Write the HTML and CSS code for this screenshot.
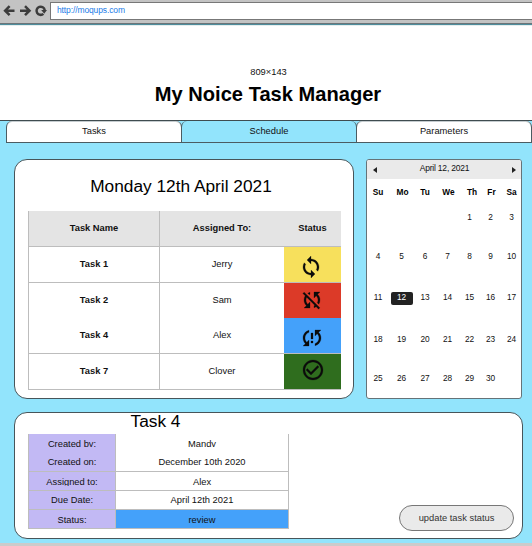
FILE: index.html
```html
<!DOCTYPE html>
<html lang="en">
<head>
<meta charset="utf-8">
<title>My Noice Task Manager</title>
<link rel="stylesheet" href="styles.css">
</head>
<body>
<div class="browser">
  <svg class="nav" viewBox="0 0 50 23" fill="none" stroke="#3c3c3c" stroke-width="2.5">
    <path d="M5 10.700H14.500M9.600 6.200L5.100 10.700L9.600 15.200"/>
    <path d="M20 10.700H29.500M25 6.200L29.500 10.700L25 15.200"/>
    <path d="M43.400 13.800A4.100 4.100 0 1 1 44.700 10.200"/>
    <path d="M41.200 10H47L44.200 13.800Z" fill="#3c3c3c" stroke="none"/>
  </svg>
  <div class="address">http://moqups.com</div>
</div>
<header class="header">
  <div class="dims">809×143</div>
  <h1>My Noice Task Manager</h1>
</header>
<nav class="tabs">
  <div class="tab">Tasks</div>
  <div class="tab active">Schedule</div>
  <div class="tab">Parameters</div>
</nav>
<main class="main">
  <section class="card schedule">
    <h2>Monday 12th April 2021</h2>
    <div class="tasks">
      <div class="row head"><b>Task Name</b><b>Assigned To:</b><b class="status">Status</b></div>
      <div class="row"><b>Task 1</b><span>Jerry</span><div class="status yellow"><svg class="icon low sync" viewBox="0 0 24 24"><path d="M12 4V1L8 5l4 4V6c3.310 0 6 2.690 6 6 0 1.010-.25 1.970-.7 2.800l1.460 1.460C19.540 15.030 20 13.570 20 12c0-4.420-3.580-8-8-8zm0 14c-3.310 0-6-2.690-6-6 0-1.010.25-1.970.7-2.800L5.240 7.740C4.460 8.970 4 10.430 4 12c0 4.420 3.580 8 8 8v3l4-4-4-4v3z"/></svg></div></div>
      <div class="row merged"><b>Task 2</b><span>Sam</span><div class="status red"><svg class="icon disabled" viewBox="0 0 24 24"><path d="M10 6.350V4.260c-.8.210-1.550.540-2.230.960l1.460 1.460c.25-.12.5-.24.77-.33zm-7.140-.94l2.360 2.360C4.450 8.990 4 10.440 4 12c0 2.210.91 4.200 2.360 5.640L4 20h6v-6l-2.240 2.240C6.680 15.150 6 13.660 6 12c0-1 .25-1.940.68-2.770l8.080 8.080c-.25.130-.5.250-.77.340v2.090c.8-.21 1.550-.54 2.230-.96l2.360 2.360 1.270-1.270L4.140 4.140 2.860 5.410zM20 4h-6v6l2.240-2.240C17.320 8.850 18 10.340 18 12c0 1-.25 1.940-.68 2.770l1.460 1.460C19.550 15.010 20 13.560 20 12c0-2.210-.91-4.200-2.360-5.640L20 4z"/></svg></div></div>
      <div class="row"><b>Task 4</b><span>Alex</span><div class="status blue"><svg class="icon low" viewBox="0 0 24 24"><path d="M3 12c0 2.210.91 4.200 2.360 5.640L3 20h6v-6l-2.240 2.240C5.680 15.150 5 13.660 5 12c0-2.610 1.670-4.830 4-5.650V4.260C5.550 5.150 3 8.270 3 12zm8 5h2v-2h-2v2zM21 4h-6v6l2.240-2.240C18.320 8.850 19 10.340 19 12c0 2.610-1.670 4.830-4 5.650v2.090c3.450-.89 6-4.010 6-7.740 0-2.210-.91-4.200-2.360-5.640L21 4zm-10 9h2V7h-2v6z"/></svg></div></div>
      <div class="row"><b>Task 7</b><span>Clover</span><div class="status green"><svg class="icon high" viewBox="0 0 24 24"><path d="M16.590 7.580L10 14.170l-3.590-3.580L5 12l5 5 8-8-1.410-1.420zM12 2C6.480 2 2 6.480 2 12s4.480 10 10 10 10-4.480 10-10S17.520 2 12 2zm0 18c-4.420 0-8-3.580-8-8s3.580-8 8-8 8 3.580 8 8-3.580 8-8 8z"/></svg></div></div>
    </div>
  </section>
  <section class="calendar">
    <div class="cal-head">
      <svg class="arrow" viewBox="0 0 4 6"><path d="M4 0V6L0 3Z"/></svg>
      <span>April 12, 2021</span>
      <svg class="arrow" viewBox="0 0 4 6"><path d="M0 0V6L4 3Z"/></svg>
    </div>
    <div class="days">
      <b>Su</b><b>Mo</b><b>Tu</b><b>We</b><b>Th</b><b>Fr</b><b>Sa</b>
      <i></i><i></i><i></i><i></i><span>1</span><span>2</span><span>3</span>
      <span>4</span><span>5</span><span>6</span><span>7</span><span>8</span><span>9</span><span>10</span>
      <span>11</span><span class="today">12</span><span>13</span><span>14</span><span>15</span><span>16</span><span>17</span>
      <span>18</span><span>19</span><span>20</span><span>21</span><span>22</span><span>23</span><span>24</span>
      <span>25</span><span>26</span><span>27</span><span>28</span><span>29</span><span>30</span>
    </div>
  </section>
  <section class="card detail">
    <h2>Task 4</h2>
    <div class="detail-body">
      <div class="fields">
        <div class="key open"><p class="tight">Created by:</p></div><div class="value open"><p class="tight">Mandy</p></div>
        <div class="key"><p>Created on:</p></div><div class="value"><p>December 10th 2020</p></div>
        <div class="key"><p class="snug">Assigned to:</p></div><div class="value"><p>Alex</p></div>
        <div class="key raised"><p>Due Date:</p></div><div class="value raised"><p>April 12th 2021</p></div>
        <div class="key"><p>Status:</p></div><div class="value blue"><p>review</p></div>
      </div>
      <button class="update">update task status</button>
    </div>
  </section>
</main>
</body>
</html>
```
FILE: styles.css
```css
* { box-sizing: border-box; }
body {
  margin: 0;
  width: 532px;
  height: 546px;
  overflow: hidden;
  display: flex;
  flex-direction: column;
  background: #cbcbcb;
  color: #111;
  font: 9.33px/12px "Liberation Sans", Arial, sans-serif;
}
h1, h2, p { margin: 0; }
.browser {
  height: 26px;
  flex: none;
  display: flex;
  background: #c3c3c3;
  border-bottom: 1px solid #e6eeee;
  box-shadow: inset 0 -1px #4e8d9d, inset 0 -2px #6c7478;
}
.nav { width: 50px; height: 23px; }
.address {
  flex: 1;
  height: 18px;
  margin-top: 2px;
  padding-left: 6px;
  border: 1px solid #777;
  border-right: 0;
  background: #fff;
  color: #1b7ce8;
  font-size: 8.5px;
  letter-spacing: -.12px;
  line-height: 15px;
}
.header {
  height: 95px;
  flex: none;
  padding-top: 40px;
  border-bottom: 1px solid #3f4c50;
  background: #fff;
  text-align: center;
}
.dims { margin-left: 5px; }
h1 {
  margin: 4px 0 0 4px;
  color: #000;
  font-size: 20.1px;
  line-height: 24px;
}
.tabs {
  height: 22px;
  flex: none;
  display: grid;
  grid-template-columns: 176px 175px 175px;
  padding-left: 6px;
  background: #92e4fc;
}
.tab {
  border: solid #4b5c62;
  border-width: 0 1px 1px;
  border-radius: 6px 6px 0 0;
  background: #fff;
  box-shadow: inset 0 1px #c5cccf;
  line-height: 20px;
  text-align: center;
}
.tab + .tab { margin-left: -1px; }
.tab.active { background: #92e4fc; box-shadow: none; }
.main {
  height: 400px;
  flex: none;
  display: grid;
  grid-template: 240px 127px / 340px 156px;
  gap: 13px 12px;
  padding: 16px 0 0 14px;
  background: #92e4fc;
}
.card {
  border: 1px solid #47555a;
  border-radius: 13px;
  background: #fff;
}
.schedule { padding: 15px 0 0 13px; }
h2 { font-weight: normal; font-size: 17.3px; line-height: 22px; color: #000; }
.schedule h2 { padding-right: 19px; text-align: center; }
.tasks { width: 313px; margin-top: 14px; }
.row {
  height: 36px;
  display: grid;
  grid-template-columns: 131px 125px 57px;
  border-bottom: 1px solid #bdbdbd;
  text-align: center;
  line-height: 35px;
}
.row > :not(.status) { border-left: 1px solid #bdbdbd; }
.row.merged { height: 35px; border-bottom: 0; }
.head { background: #e4e4e4; }
.status { display: flex; justify-content: center; align-items: center; }
.icon { width: 24px; height: 24px; margin-right: 1px; fill: #0b0b0b; stroke: #0b0b0b; stroke-width: .25; }
.low { margin-top: 5px; }
.sync { margin-right: 3px; }
.disabled { margin-bottom: 2px; }
.high { margin-bottom: 4px; margin-right: 0; }
.yellow { background: #f7e05c; }
.red { background: #dc3a28; }
.blue { background: #44a1fa; }
.green { background: #2f6d1e; }
.calendar {
  border: 1px solid #657378;
  border-radius: 3px;
  background: #fff;
  overflow: hidden;
}
.cal-head {
  height: 19px;
  display: flex;
  justify-content: space-between;
  align-items: center;
  padding: 0 5px 0 6px;
  background: #eaeaea;
  font-size: 8.5px;
  letter-spacing: -.2px;
}
.cal-head span { padding-bottom: 3px; }
.arrow { width: 4px; height: 6px; margin-top: 1px; fill: #222; }
.days {
  display: grid;
  grid-template: 26px 39px 41px 42px 39px 30px / 22px 25px 22px 23px 21px 21px 21px;
  padding-top: 7px;
  font-size: 8.3px;
  text-align: center;
}
.days b { color: #000; }
.days b:nth-child(2), .days b:nth-child(4) { padding-left: 2px; }
.days b:nth-child(5) { padding-left: 5px; }
.days b:nth-child(6) { padding-left: 2px; }
.days span { margin-top: -1px; }
.days .today {
  width: 22px;
  height: 13px;
  margin: 0 0 0 1.5px;
  border-radius: 2px;
  background: #222;
  color: #fff;
  line-height: 10px;
}
.detail {
  width: 509px;
  grid-column: 1 / 3;
  padding-left: 13px;
}
.detail h2 { width: 255px; height: 21px; line-height: 17px; text-align: center; }
.detail-body { display: flex; justify-content: space-between; align-items: flex-start; padding-right: 8px; }
.fields {
  width: 261px;
  display: grid;
  grid-template: 18px 20px 19px 19px 19px / 87px 172px;
  border: solid #bdbdbd;
  border-width: 0 1px;
  text-align: center;
}
.key, .value { border-bottom: 1px solid #bdbdbd; padding-top: 4px; }
.open { border-bottom: 0; }
.raised { padding-top: 3px; }
.key { background: #c2b9f4; border-right: 1px solid #bdbdbd; }
.fields p { height: 12px; overflow: hidden; }
.fields .tight { height: 9px; }
.fields .snug { height: 10px; }
.update {
  width: 115px;
  height: 26px;
  margin-top: 71px;
  padding: 0;
  border: 1px solid #777;
  border-radius: 13px;
  background: #eaeaea;
  color: #333;
  font: 9.33px "Liberation Sans", Arial, sans-serif;
}
```
